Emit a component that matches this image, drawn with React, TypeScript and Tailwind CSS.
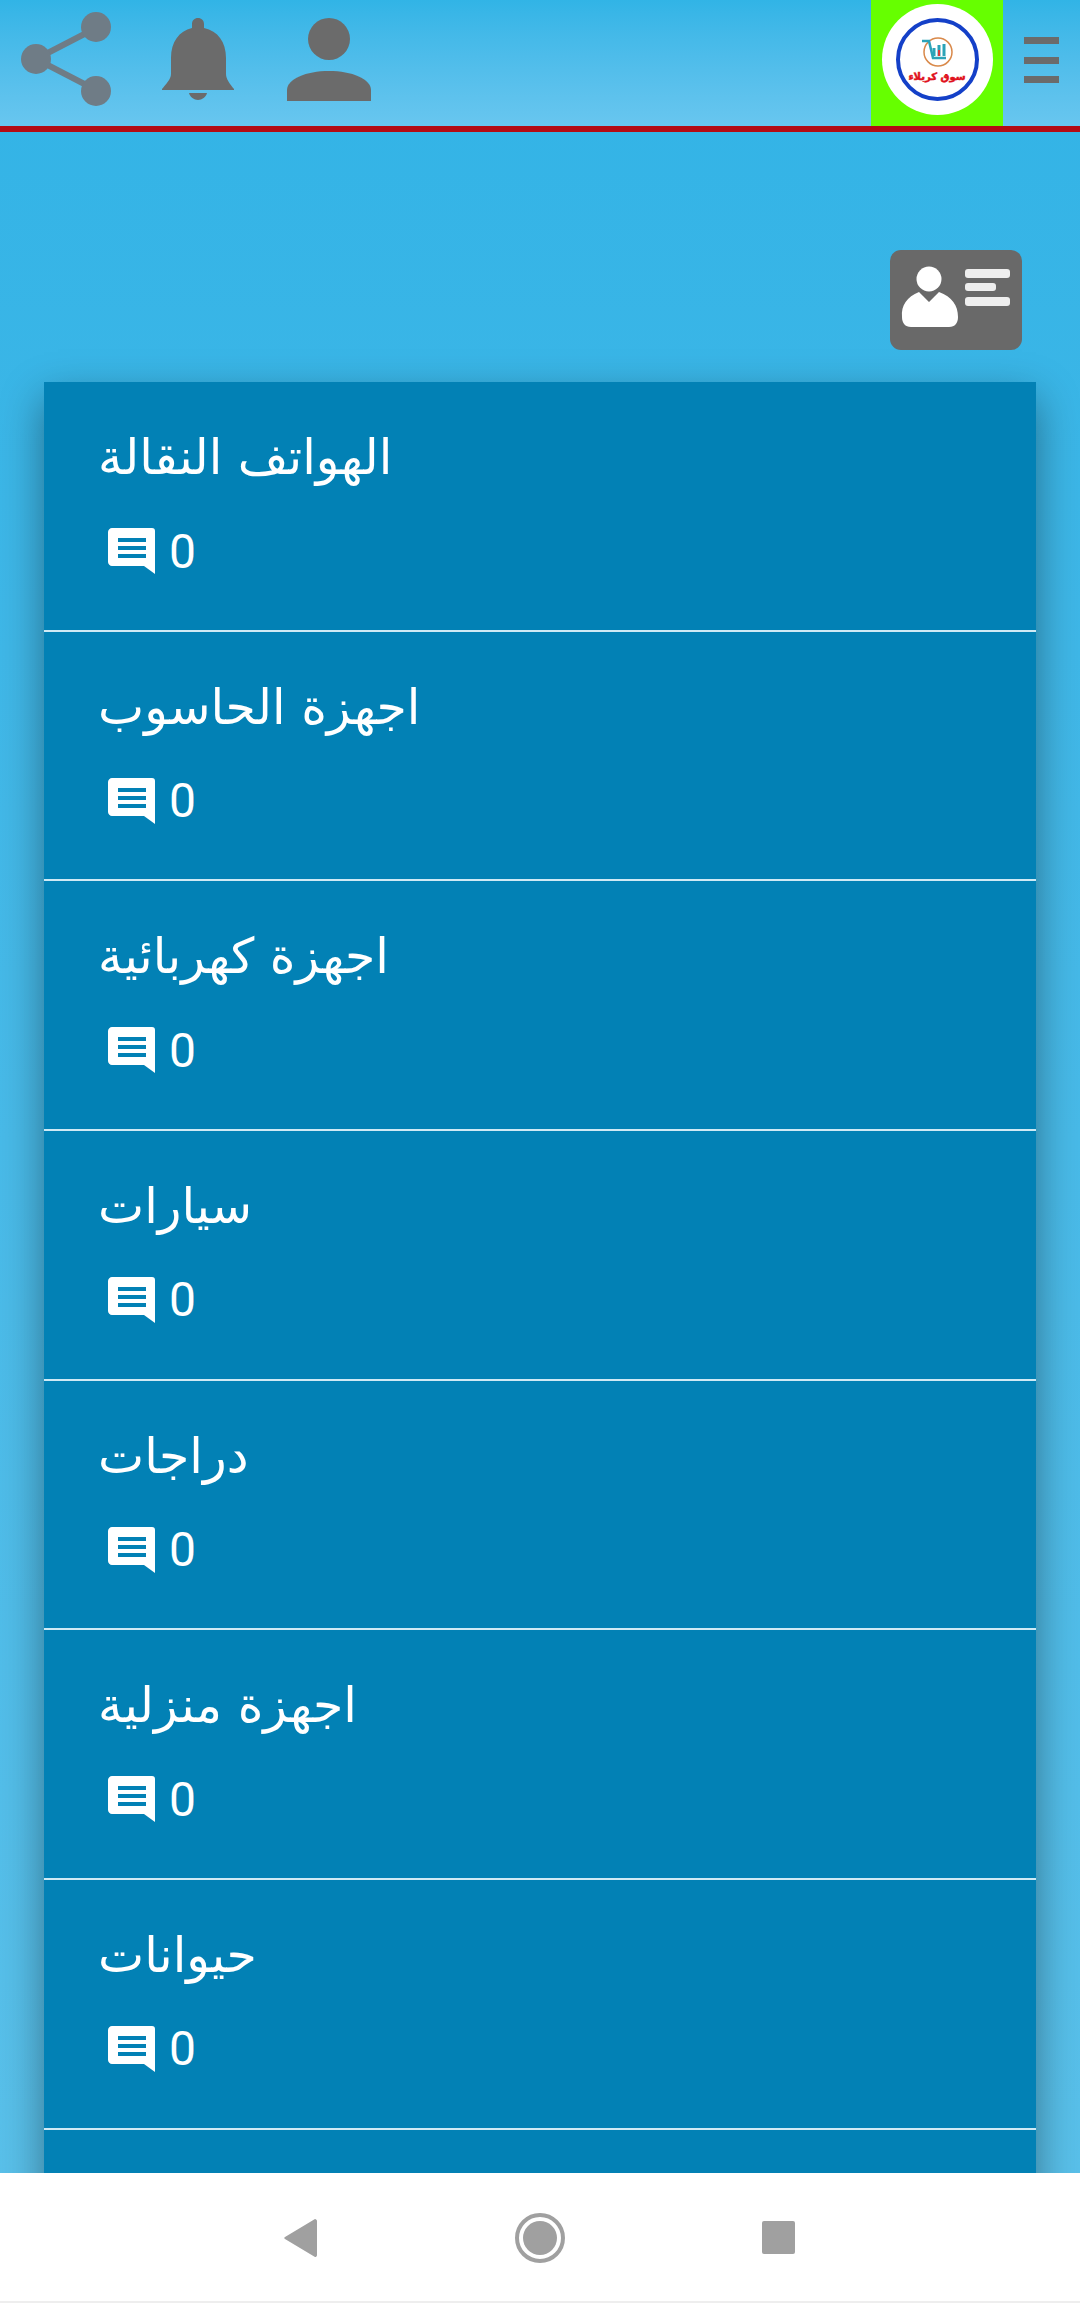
const CATEGORIES = [
  'الهواتف النقالة',
  'اجهزة الحاسوب',
  'اجهزة كهربائية',
  'سيارات',
  'دراجات',
  'اجهزة منزلية',
  'حيوانات',
]

function ShareIcon() {
  return (
    <svg width="92" height="94" viewBox="0 0 92 94" className="ml-[21px] mt-[12px] shrink-0">
      <path d="M75 16 L15 47 L75 78" fill="none" stroke="#6f7c86" strokeWidth="6" />
      <circle cx="15" cy="47" r="15" fill="#6f7c86" />
      <circle cx="75" cy="15" r="15" fill="#6f7c86" />
      <circle cx="75" cy="79" r="15" fill="#6f7c86" />
    </svg>
  )
}

function BellIcon() {
  return (
    <svg width="72" height="84" viewBox="0 0 72 84" className="ml-[49px] mt-[18px] shrink-0" fill="#6b6b6b">
      <path d="M36 0c3.500 0 6 2.500 6 6v4c14 3 22 14 22 30v16c0 5 4 10 8 15v1H0v-1c4-5 9-10 9-15V40C9 24 17 13 30 10V6c0-3.500 2.500-6 6-6z" />
      <path d="M27 75h18c-1 4-5 7-9 7s-8-3-9-7z" />
    </svg>
  )
}

function PersonIcon() {
  return (
    <svg width="84" height="84" viewBox="0 0 84 84" className="ml-[53px] mt-[18px] shrink-0" fill="#6b6b6b">
      <circle cx="42" cy="21" r="21" />
      <path d="M0 83V72C0 61 19 53 42 53s42 8 42 19v11z" />
    </svg>
  )
}

function LogoMark() {
  return (
    <div className="flex h-[111px] w-[111px] items-center justify-center rounded-full bg-white">
      <div className="flex h-[83px] w-[83px] flex-col items-center justify-center gap-[3px] rounded-full border-[4px] border-[#1440c8]">
        <svg width="32" height="32" viewBox="0 0 32 32" className="shrink-0">
          <circle cx="17" cy="16" r="14" fill="none" stroke="#d9894a" strokeWidth="1.500" />
          <path d="M1 5h7l4 17h13" fill="none" stroke="#2aa3b8" strokeWidth="2.500" />
          <path d="M13 20v-8M18 20V9M23 20v-12" stroke="#2aa3b8" strokeWidth="3" />
          <path d="M18 20v-6" stroke="#d93a3a" strokeWidth="2" />
        </svg>
        <span
          dir="rtl"
          className="whitespace-nowrap text-[10px] leading-[12px] font-bold text-[#e0101c] [-webkit-text-stroke:0.5px_#e0101c] [font-family:'DejaVu_Sans',sans-serif]"
        >
          سوق كربلاء
        </span>
      </div>
    </div>
  )
}

function ProfileCard() {
  return (
    <svg width="132" height="100" viewBox="0 0 132 100" className="shrink-0">
      <rect width="132" height="100" rx="11" fill="#696969" />
      <circle cx="39" cy="29" r="12.500" fill="#fff" />
      <path d="M12 67c-1-12 5-20 17-25l10 10 10-10c13 5 19 13 19 25 0 6-3 10-9 10H21c-6 0-9-4-9-10z" fill="#fff" />
      <rect x="75" y="19" width="45" height="9" rx="3" fill="#eeeeee" />
      <rect x="75" y="33" width="31" height="8" rx="3" fill="#eeeeee" />
      <rect x="75" y="47" width="45" height="9" rx="3" fill="#eeeeee" />
    </svg>
  )
}

function MessageIcon() {
  return (
    <svg width="47" height="47" viewBox="0 0 47 47" className="shrink-0">
      <path d="M4 0h40c2 0 3 1 3 3v43L36 38H4c-2 0-4-2-4-4V4c0-2 2-4 4-4z" fill="#fff" />
      <rect x="10" y="10" width="28" height="4" fill="#0281b5" />
      <rect x="10" y="18" width="28" height="4" fill="#0281b5" />
      <rect x="10" y="26" width="28" height="4" fill="#0281b5" />
    </svg>
  )
}

function CategoryRow({ title }: { title: string }) {
  return (
    <div className="h-[249.67px] border-b-2 border-[#cfeaf5] pl-[54px] pt-[44px] text-white">
      <div className="h-[64px] text-[49px] leading-[64px] whitespace-nowrap [font-family:'DejaVu_Sans',sans-serif]">
        {title}
      </div>
      <div className="mt-[38px] flex h-[47px] items-center pl-[10px]">
        <MessageIcon />
        <span className="ml-[14px] text-[48px] leading-none [font-family:Roboto,sans-serif]">0</span>
      </div>
    </div>
  )
}

export default function App() {
  return (
    <div className="flex h-[2303px] w-[1080px] flex-col overflow-hidden bg-gradient-to-b from-[#31b3e6] to-[#5bc1ea]">
      <header className="flex h-[132px] shrink-0 border-b-[6px] border-[#b30b14] bg-gradient-to-b from-[#31b4e6] to-[#68c6ef]">
        <ShareIcon />
        <BellIcon />
        <PersonIcon />
        <div className="ml-auto flex h-[126px] w-[132px] shrink-0 justify-center bg-[#66ff00] pt-[4px]">
          <LogoMark />
        </div>
        <div className="ml-[21px] mr-[21px] mt-[37px] flex h-[46px] w-[35px] shrink-0 flex-col justify-between">
          <span className="h-[7px] bg-[#6b6b6b]" />
          <span className="h-[7px] bg-[#6b6b6b]" />
          <span className="h-[7px] bg-[#6b6b6b]" />
        </div>
      </header>

      <main className="min-h-0 flex-1 overflow-hidden">
        <div className="flex justify-end pr-[58px] pt-[118px]">
          <ProfileCard />
        </div>
        <div className="mx-[44px] mt-[32px] h-[1900px] bg-[#0281b5] shadow-[0_16px_40px_rgba(0,0,0,0.4)]">
          {CATEGORIES.map((title) => (
            <CategoryRow key={title} title={title} />
          ))}
        </div>
      </main>

      <nav className="flex h-[130px] shrink-0 border-b-2 border-[#eeeeee] bg-white">
        <svg width="33" height="38" viewBox="0 0 33 38" className="ml-[284px] mt-[46px] shrink-0" fill="#a0a0a0">
          <path d="M31 0c1 0 2 1 2 2v34c0 1.500-1 2-2 2L1 20c-1-.5-1-1.500 0-2z" />
        </svg>
        <div className="ml-[198px] mt-[40px] flex h-[50px] w-[50px] shrink-0 items-center justify-center rounded-full border-[4px] border-[#a0a0a0]">
          <div className="h-[34px] w-[34px] rounded-full bg-[#a0a0a0]" />
        </div>
        <div className="ml-[197px] mt-[48px] h-[33px] w-[33px] shrink-0 rounded-[2px] bg-[#a0a0a0]" />
      </nav>
    </div>
  )
}
